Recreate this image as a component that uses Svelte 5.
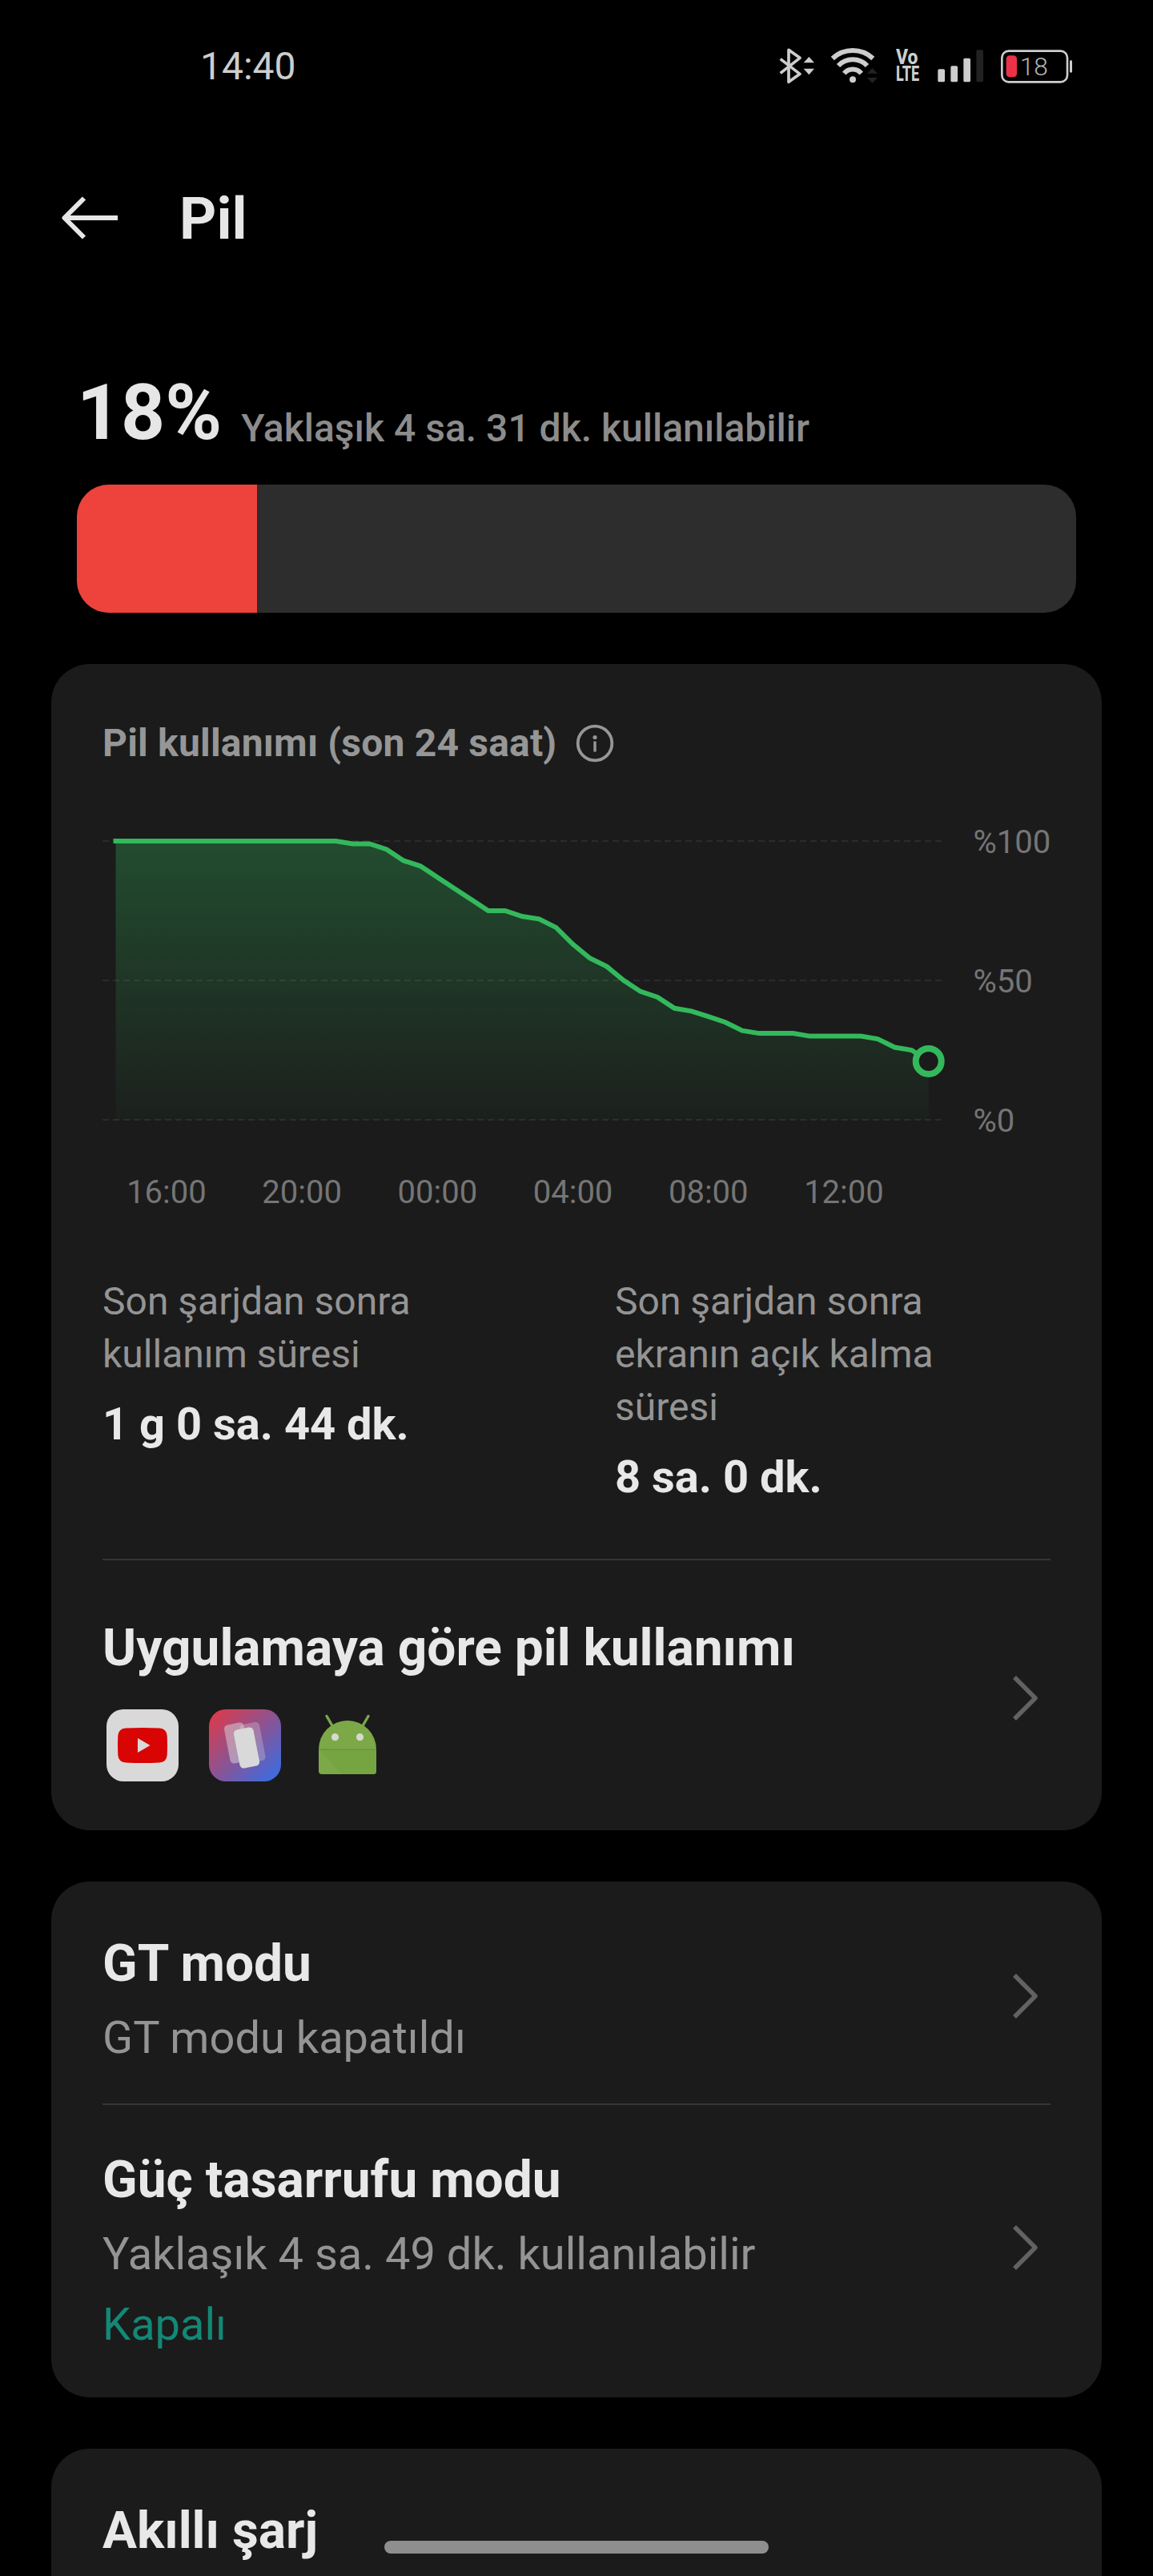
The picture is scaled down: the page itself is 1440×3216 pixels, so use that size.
<script>
	let percent = 18;

	// one reading every half hour
	let levels = [
		100, 100, 100, 100, 100, 100, 100, 100, 100, 100, 100, 100, 100, 100,
		99, 99, 97, 93, 91, 87, 83, 79, 75, 75, 73, 72, 69, 63, 58, 55, 50, 46,
		44, 40, 39, 37, 35, 32, 31, 31, 31, 30, 30, 30, 30, 29, 26, 25, 21
	];
	let hours = ['16:00', '20:00', '00:00', '04:00', '08:00', '12:00'];
	let scale = [100, 50, 0];

	const left = 16.5;
	const step = 21.15;

	const x = (i) => left + i * step;
	const y = (level) => 50 + (100 - level) * 3.48;

	let last = levels.length - 1;
	let line = levels.map((level, i) => `${x(i).toFixed(1)},${y(level).toFixed(1)}`).join(' ');
	let area = `${x(0)},${y(0)} ${line} ${x(last)},${y(0)}`;

	let stats = [
		{ label: 'Son şarjdan sonra kullanım süresi', value: '1 g 0 sa. 44 dk.' },
		{ label: 'Son şarjdan sonra ekranın açık kalma süresi', value: '8 sa. 0 dk.' }
	];

	let modes = [
		{ title: 'GT modu', info: 'GT modu kapatıldı', state: '' },
		{ title: 'Güç tasarrufu modu', info: 'Yaklaşık 4 sa. 49 dk. kullanılabilir', state: 'Kapalı' }
	];
</script>

<div class="screen">
	<div class="status">
		<span class="time">14:40</span>
		<div class="icons">
			<svg width="43" height="50" viewBox="93 50 129 150">
				<path d="M104 100 L177 156 L135 186 V66 L177 96 L104 153" fill="none" stroke="#cdcdcd" stroke-width="11" stroke-linejoin="round" />
				<path d="M191 114 H231 L211 92 Z M191 136 H231 L211 159 Z" fill="#cdcdcd" />
			</svg>
			<svg width="60" height="50" viewBox="288 50 180 150">
				<g fill="none" stroke="#cdcdcd" stroke-width="18">
					<path d="M299.300 98 A111 111 0 0 1 450.700 98" />
					<path d="M321 125 A75 75 0 0 1 429 125" />
					<path d="M343 154 A41 41 0 0 1 407 154" />
				</g>
				<circle cx="375" cy="177" r="12" fill="#cdcdcd" />
				<path d="M429 154 H468 L448 134 Z M429 170 H468 L448 190 Z" fill="#222" />
			</svg>
			<div class="volte">
				<span>Vo</span>
				<span>LTE</span>
			</div>
			<svg width="58" height="50" viewBox="690 50 174 150" fill="#cdcdcd">
				<rect x="694" y="138" width="26" height="48" rx="5" />
				<rect x="742" y="126" width="26" height="60" rx="5" />
				<rect x="790" y="97" width="26" height="89" rx="5" />
				<rect x="838" y="66" width="26" height="120" rx="5" fill="#222" />
			</svg>
			<svg width="90" height="50" viewBox="930 50 270 150">
				<rect x="934" y="70" width="245" height="116" rx="25" fill="none" stroke="#cdcdcd" stroke-width="8" />
				<rect x="1188" y="105" width="9" height="46" rx="4" fill="#cdcdcd" />
				<rect x="950" y="87" width="40" height="81" rx="13" fill="#ea3348" />
				<text x="1001" y="162" class="charge">{percent}</text>
			</svg>
		</div>
	</div>

	<header>
		<svg width="72" height="60" viewBox="0 0 72 60" fill="none" stroke="#e6e6e6" stroke-width="6">
			<path d="M4 30 H71 M29 5.500 L4.500 30 L29 54.500" stroke-linejoin="round" />
		</svg>
		<h1>Pil</h1>
	</header>

	<section class="summary">
		<div class="level">
			<span class="percent">{percent}%</span>
			<span class="remaining">Yaklaşık 4 sa. 31 dk. kullanılabilir</span>
		</div>
		<div class="bar">
			<div class="fill" style="width: {percent}%"></div>
		</div>
	</section>

	<section class="card usage">
		<div class="caption">
			<span>Pil kullanımı (son 24 saat)</span>
			<svg width="48" height="48" viewBox="0 0 48 48">
				<circle cx="24" cy="24" r="21.300" fill="none" stroke="#969696" stroke-width="3.800" />
				<circle cx="24" cy="16.500" r="2.600" fill="#969696" />
				<rect x="22.300" y="21.500" width="3.400" height="13" fill="#969696" />
			</svg>
		</div>

		<svg class="chart" width="1184" height="520" viewBox="0 0 1184 520">
			<defs>
				<linearGradient id="fade" x1="0" y1="0" x2="0" y2="1">
					<stop offset="0" stop-color="#33b95c" stop-opacity="0.31" />
					<stop offset="1" stop-color="#33b95c" stop-opacity="0.03" />
				</linearGradient>
			</defs>
			<polygon points={area} fill="url(#fade)" />
			{#each scale as value}
				<line x1="0" x2="1048" y1={y(value)} y2={y(value)} stroke="#fff" stroke-opacity="0.07" stroke-width="2" stroke-dasharray="8 5" />
				<text x="1087.5" y={y(value) + 15}>%{value}</text>
			{/each}
			<polyline points={line} fill="none" stroke="#33b95c" stroke-width="6" stroke-linecap="square" />
			<circle cx={x(last)} cy={y(levels[last])} r="16" fill="#1b1b1b" stroke="#33b95c" stroke-width="8" />
			{#each hours as hour, i}
				<text x={x(3 + i * 8)} y="502" text-anchor="middle">{hour}</text>
			{/each}
		</svg>

		<div class="stats">
			{#each stats as stat}
				<div class="stat">
					<p>{stat.label}</p>
					<strong>{stat.value}</strong>
				</div>
			{/each}
		</div>

		<div class="divider"></div>

		<div class="row apps">
			<div>
				<h2>Uygulamaya göre pil kullanımı</h2>
				<div class="app-icons">
					<svg width="90" height="90" viewBox="0 0 90 90">
						<rect width="90" height="90" rx="21" fill="#d9d9d9" />
						<path d="M24 23.500 Q45 22.500 66 23.500 Q75 24 75.700 33 Q76.300 45 75.700 57 Q75 66 66 66.500 Q45 67.500 24 66.500 Q15 66 14.300 57 Q13.700 45 14.300 33 Q15 24 24 23.500 Z" fill="#d90404" />
						<path d="M39 36 L54.500 45 L39 54 Z" fill="#d9d9d9" />
					</svg>
					<svg width="90" height="90" viewBox="0 0 90 90">
						<defs>
							<linearGradient id="tile" x1="0" y1="0" x2="1" y2="1">
								<stop offset="0.08" stop-color="#d63c50" />
								<stop offset="0.5" stop-color="#8a5494" />
								<stop offset="0.9" stop-color="#426adb" />
							</linearGradient>
						</defs>
						<rect width="90" height="90" rx="21" fill="url(#tile)" />
						<g fill="#d9d9d9">
							<rect x="22.500" y="17.500" width="25" height="49" rx="5" transform="rotate(-11 35 42)" opacity="0.5" />
							<rect x="42" y="17" width="25" height="49" rx="5" transform="rotate(-11 54.500 41.500)" opacity="0.3" />
							<rect x="34.500" y="23.500" width="25" height="49" rx="5" transform="rotate(-11 47 48)" />
						</g>
					</svg>
					<svg width="90" height="90" viewBox="0 0 90 90">
						<path d="M19 8.500 L28 24 M71 8.500 L62 24" stroke="#7ba747" stroke-width="3.400" stroke-linecap="round" />
						<path d="M9 50 A36 36 0 0 1 81 50 V77 Q81 81 77 81 H13 Q9 81 9 77 Z" fill="#7ca848" />
						<path d="M9 50 H81 V77 Q81 81 77 81 H38 Z" fill="#75a540" />
						<rect x="9" y="49.500" width="72" height="1.500" fill="#69963a" />
						<circle cx="29.500" cy="34.700" r="4.600" fill="#d5d9cf" />
						<circle cx="60.500" cy="34.700" r="4.600" fill="#d5d9cf" />
					</svg>
				</div>
			</div>
			<svg class="chevron" width="34" height="58" viewBox="0 0 34 58">
				<path d="M3 3 L29 29 L3 55" />
			</svg>
		</div>
	</section>

	<section class="card modes">
		{#each modes as mode, i}
			{#if i > 0}
				<div class="divider"></div>
			{/if}
			<div class="row">
				<div>
					<h2>{mode.title}</h2>
					<p>{mode.info}</p>
					{#if mode.state}
						<p class="state">{mode.state}</p>
					{/if}
				</div>
				<svg class="chevron" width="34" height="58" viewBox="0 0 34 58">
					<path d="M3 3 L29 29 L3 55" />
				</svg>
			</div>
		{/each}
	</section>

	<section class="card smart">
		<h2>Akıllı şarj</h2>
	</section>

	<div class="home-bar"></div>
</div>

<style>
	:global(body) {
		margin: 0;
		background: #000;
	}

	.screen {
		position: relative;
		width: 1440px;
		height: 3216px;
		overflow: hidden;
		background: #000;
		color: #e8e8e8;
		font-family: Roboto, 'Liberation Sans', sans-serif;
	}

	h1, h2, p {
		margin: 0;
	}

	svg {
		display: block;
		flex-shrink: 0;
		overflow: visible;
	}

	.status {
		display: flex;
		justify-content: space-between;
		align-items: center;
		height: 164px;
		padding: 0 100px 0 250px;
		box-sizing: border-box;
	}

	.time {
		padding-top: 2px;
		font-size: 48px;
		line-height: 60px;
		color: #cdcdcd;
	}

	.icons {
		display: flex;
		gap: 22px;
	}

	.volte {
		width: 30px;
		height: 50px;
		padding: 4px 0 0 1px;
		box-sizing: border-box;
		color: #cdcdcd;
		font-size: 26px;
		font-weight: 800;
		line-height: 21px;
	}

	.volte span {
		display: block;
		width: max-content;
		transform: scaleX(0.88);
		transform-origin: 0 0;
	}

	.volte span:last-child {
		transform: scaleX(0.69);
	}

	.charge {
		font-size: 95px;
		font-weight: 300;
		fill: #b4b4b4;
	}

	header {
		display: flex;
		align-items: center;
		gap: 76px;
		height: 216px;
		padding-left: 76px;
	}

	h1 {
		padding-top: 3px;
		font-size: 72px;
		line-height: 84px;
		font-weight: 700;
		color: #e6e6e6;
	}

	.summary {
		padding: 79px 96px 0;
	}

	.level {
		display: flex;
		align-items: flex-end;
		gap: 24px;
	}

	.percent {
		font-size: 96px;
		line-height: 112px;
		font-weight: 700;
		color: #e6e6e6;
	}

	.remaining {
		margin-bottom: 8px;
		font-size: 48px;
		line-height: 56px;
		font-weight: 500;
		color: #8c8c8c;
	}

	.bar {
		height: 160px;
		margin-top: 34px;
		border-radius: 40px;
		background: #2d2d2d;
		overflow: hidden;
	}

	.fill {
		height: 100%;
		background: #ee423d;
	}

	.card {
		margin: 64px 64px 0;
		padding: 0 64px;
		border-radius: 48px;
		background: #1b1b1b;
	}

	.usage {
		padding-top: 69px;
		padding-bottom: 61px;
	}

	.caption {
		display: flex;
		align-items: center;
		gap: 24px;
		font-size: 48px;
		line-height: 60px;
		font-weight: 700;
		letter-spacing: 0.2px;
		color: #969696;
	}

	.chart {
		margin-top: 42px;
	}

	.chart text {
		font-size: 40px;
		fill: #757575;
	}

	.stats {
		display: grid;
		grid-template-columns: 1fr 1fr;
		gap: 96px;
		margin-top: 72px;
	}

	.stat p {
		padding-right: 80px;
		font-size: 48px;
		line-height: 66px;
		color: #949494;
	}

	.stat strong {
		display: block;
		margin-top: 21px;
		font-size: 56px;
		line-height: 66px;
		font-weight: 700;
	}

	.divider {
		height: 2px;
		background: #353535;
	}

	.usage .divider {
		margin-top: 69px;
	}

	.row {
		display: flex;
		justify-content: space-between;
		align-items: center;
		padding-right: 14px;
	}

	.apps {
		margin-top: 72px;
	}

	h2 {
		font-size: 64px;
		line-height: 76px;
		font-weight: 700;
	}

	.app-icons {
		display: flex;
		gap: 38px;
		margin: 38px 0 0 5px;
	}

	.chevron {
		margin-bottom: 4px;
		fill: none;
		stroke: #626262;
		stroke-width: 5.5;
		stroke-linejoin: round;
	}

	.modes {
		padding-top: 65px;
		padding-bottom: 58px;
	}

	.modes .divider {
		margin: 49px 0 56px;
	}

	.modes .chevron {
		margin-bottom: 7px;
	}

	.modes p {
		margin-top: 22px;
		font-size: 56px;
		line-height: 66px;
		color: #949494;
	}

	.modes h2 + p {
		margin-top: 21px;
	}

	.modes .state {
		color: #138876;
	}

	.smart {
		height: 300px;
		padding-top: 65px;
	}

	.home-bar {
		position: absolute;
		left: 480px;
		bottom: 28px;
		width: 480px;
		height: 16px;
		border-radius: 8px;
		background: #8e8e8e;
	}
</style>
